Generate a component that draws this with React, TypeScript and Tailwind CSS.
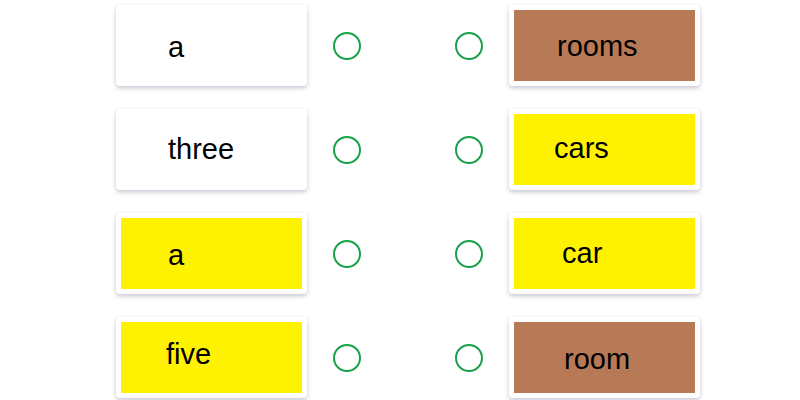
import React from "react";

type Item = { text: string; bg: "white" | "yellow" | "brown"; pl: number; dy: number };

const rows: { left: Item; right: Item }[] = [
  { left: { text: "a", bg: "white", pl: 52, dy: 1 }, right: { text: "rooms", bg: "brown", pl: 48, dy: 0 } },
  { left: { text: "three", bg: "white", pl: 52, dy: -1 }, right: { text: "cars", bg: "yellow", pl: 45, dy: -2 } },
  { left: { text: "a", bg: "yellow", pl: 52, dy: 1 }, right: { text: "car", bg: "yellow", pl: 53, dy: -1 } },
  { left: { text: "five", bg: "yellow", pl: 50, dy: -4 }, right: { text: "room", bg: "brown", pl: 55, dy: 1 } },
];

function Card({ item }: { item: Item }) {
  const inner =
    item.bg === "yellow" ? "bg-[#fff200]" : item.bg === "brown" ? "bg-[#b87a56]" : "bg-white";
  return (
    <div className="w-[191px] h-[81px] rounded-[4px] bg-white p-[5px] shadow-[0_2px_4px_rgba(90,90,130,0.35)]">
      <div className={`h-full w-full flex items-center ${inner}`} style={{ paddingLeft: item.pl - 5 }}>
        <span
          className="text-[29px] leading-[32px] text-black font-['Liberation_Sans',Arial,sans-serif]"
          style={{ marginTop: item.dy * 2 }}
        >
          {item.text}
        </span>
      </div>
    </div>
  );
}

function Circle() {
  return <div className="w-[28px] h-[28px] rounded-full border-2 border-[#18a14a] shrink-0" />;
}

export default function App() {
  return (
    <div className="w-[800px] h-[400px] bg-white overflow-hidden pt-[5px] pl-[116px] flex flex-col gap-[23px]">
      {rows.map((r, i) => (
        <div key={i} className="flex items-center">
          <Card item={r.left} />
          <div className="ml-[26px]">
            <Circle />
          </div>
          <div className="ml-[94px]">
            <Circle />
          </div>
          <div className="ml-[26px]">
            <Card item={r.right} />
          </div>
        </div>
      ))}
    </div>
  );
}
